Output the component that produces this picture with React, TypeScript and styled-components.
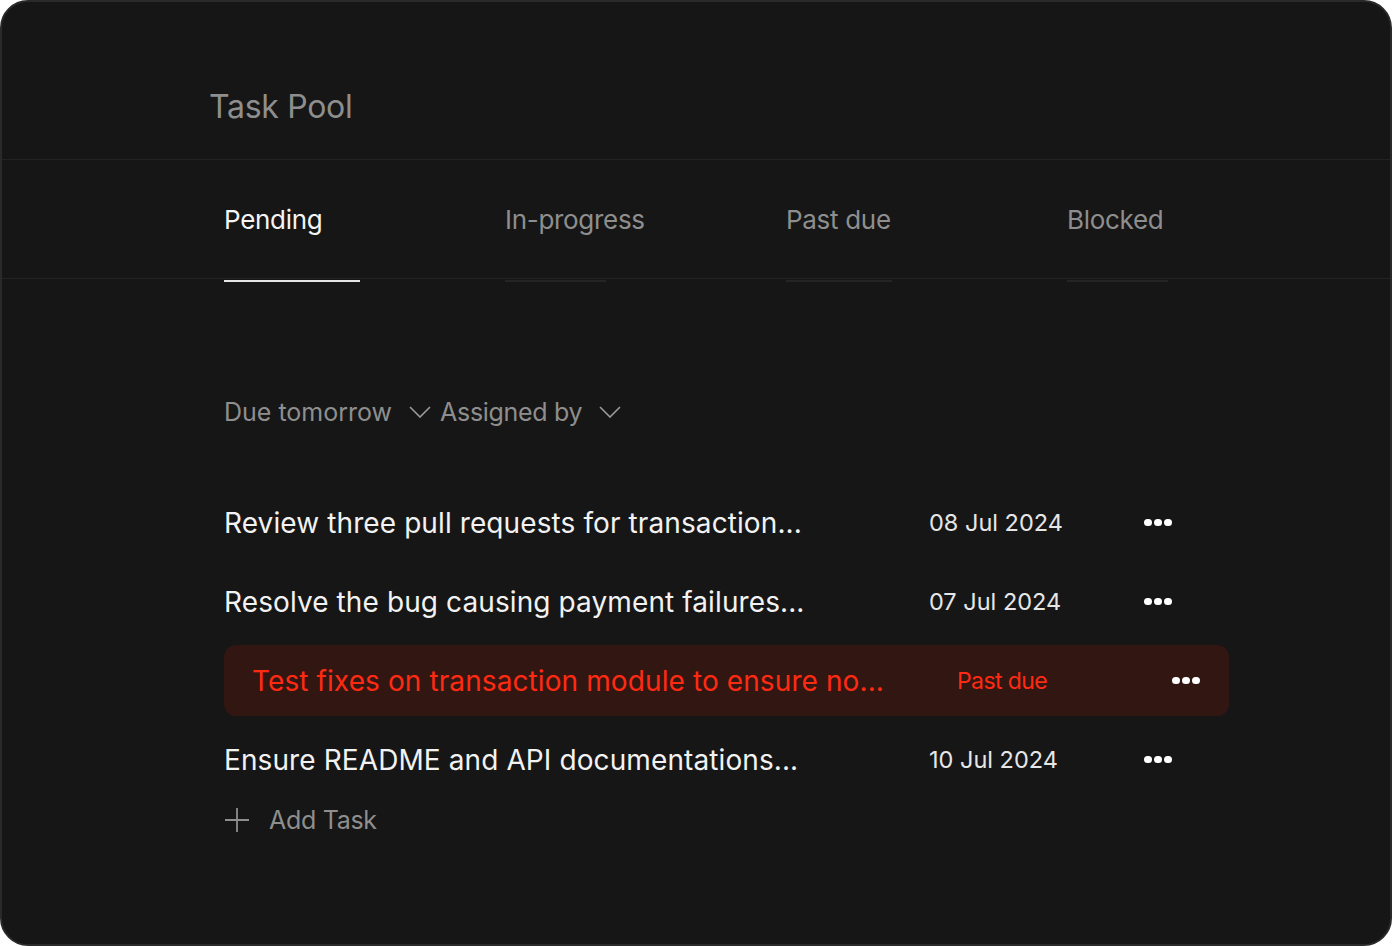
import React from "react";
import styled, { createGlobalStyle } from "styled-components";

const Global = createGlobalStyle`
  html, body { margin: 0; padding: 0; background: #ffffff; }
  body { font-family: Inter, "Noto Sans", sans-serif; -webkit-font-smoothing: antialiased; }
  * { box-sizing: border-box; }
`;

const Card = styled.div`
  width: 1392px;
  height: 946px;
  background: #161616;
  border: 2px solid #2a2a2a;
  border-radius: 28px;
  overflow: hidden;
  display: flex;
  flex-direction: column;
`;

const Header = styled.div`
  height: 158px;
  display: flex;
  align-items: flex-start;
  padding: 86px 0 0 207px;
  border-bottom: 1px solid #232323;
`;

const Title = styled.h1`
  margin: 0;
  font-size: 32px;
  line-height: 38px;
  font-weight: 400;
  color: #8e8e8e;
  letter-spacing: -0.3px;
`;

const TabBar = styled.div`
  height: 119px;
  display: grid;
  grid-template-columns: repeat(4, 281px);
  padding-left: 222px;
  border-bottom: 1px solid #232323;
`;

const Tab = styled.div<{ $active?: boolean; $line: number }>`
  position: relative;
  display: flex;
  align-items: center;
  font-size: 26px;
  font-weight: 400;
  letter-spacing: -0.3px;
  color: ${(p) => (p.$active ? "#f4f4f4" : "#8e8e8e")};
  &::after {
    content: "";
    position: absolute;
    left: 0;
    bottom: -4px;
    width: ${(p) => p.$line}px;
    height: 2px;
    background: ${(p) => (p.$active ? "#e6e6e6" : "#242424")};
  }
`;

const Body = styled.div`
  padding: 108px 0 0 222px;
  display: flex;
  flex-direction: column;
`;

const Filters = styled.div`
  display: flex;
  align-items: center;
  height: 50px;
`;

const Filter = styled.div`
  display: flex;
  align-items: center;
  gap: 17px;
  margin-right: 9px;
  font-size: 25px;
  color: #8e8e8e;
  letter-spacing: 0;
  &:last-child {
    letter-spacing: -0.3px;
  }
`;

const List = styled.div`
  margin-top: 50px;
  display: flex;
  flex-direction: column;
  width: 1005px;
`;

const Row = styled.div<{ $alert?: boolean }>`
  display: grid;
  grid-template-columns: 705px 215px 40px;
  align-items: center;
  height: 71px;
  margin-bottom: 8px;
  padding: 0 ${(p) => (p.$alert ? 28 : 0)}px;
  border-radius: 12px;
  background: ${(p) => (p.$alert ? "#321612" : "transparent")};
`;

const TaskText = styled.div<{ $alert?: boolean }>`
  font-size: 28px;
  letter-spacing: 0.1px;
  color: ${(p) => (p.$alert ? "#ff2a12" : "#f2f2f2")};
  white-space: nowrap;
`;

const DateText = styled.div<{ $alert?: boolean }>`
  font-size: ${(p) => (p.$alert ? 23 : 23.5)}px;
  letter-spacing: ${(p) => (p.$alert ? -0.6 : 0)}px;
  color: ${(p) => (p.$alert ? "#ff2a12" : "#e6e6e6")};
`;

const Dots = styled.div`
  display: flex;
  gap: 2.5px;
  span {
    width: 7.5px;
    height: 7.5px;
    border-radius: 50%;
    background: #ffffff;
  }
`;

const AddTask = styled.div`
  display: flex;
  align-items: center;
  gap: 19px;
  margin-top: 2px;
  font-size: 25px;
  color: #8e8e8e;
  letter-spacing: -0.3px;
`;

const Chevron = () => (
  <svg width="22" height="12" viewBox="0 0 22 12" fill="none">
    <path d="M1 1l10 10L21 1" stroke="#9a9a9a" strokeWidth="1.6" />
  </svg>
);

const Plus = () => (
  <svg width="26" height="26" viewBox="0 0 26 26" fill="none">
    <path d="M13 1v24M1 13h24" stroke="#8e8e8e" strokeWidth="1.8" />
  </svg>
);

const tasks = [
  { text: "Review three pull requests for transaction...", date: "08 Jul 2024" },
  { text: "Resolve the bug causing payment failures...", date: "07 Jul 2024" },
  { text: "Test fixes on transaction module to ensure no...", date: "Past due", alert: true },
  { text: "Ensure README and API documentations...", date: "10 Jul 2024" },
];

const tabs = [
  { label: "Pending", line: 136, active: true },
  { label: "In-progress", line: 101 },
  { label: "Past due", line: 106 },
  { label: "Blocked", line: 101 },
];

export default function App() {
  return (
    <>
      <Global />
      <Card>
        <Header>
          <Title>Task Pool</Title>
        </Header>
        <TabBar>
          {tabs.map((t) => (
            <Tab key={t.label} $active={t.active} $line={t.line}>
              {t.label}
            </Tab>
          ))}
        </TabBar>
        <Body>
          <Filters>
            <Filter>
              Due tomorrow <Chevron />
            </Filter>
            <Filter>
              Assigned by <Chevron />
            </Filter>
          </Filters>
          <List>
            {tasks.map((t) => (
              <Row key={t.text} $alert={t.alert}>
                <TaskText $alert={t.alert}>{t.text}</TaskText>
                <DateText $alert={t.alert}>{t.date}</DateText>
                <Dots>
                  <span />
                  <span />
                  <span />
                </Dots>
              </Row>
            ))}
          </List>
          <AddTask>
            <Plus />
            Add Task
          </AddTask>
        </Body>
      </Card>
    </>
  );
}
